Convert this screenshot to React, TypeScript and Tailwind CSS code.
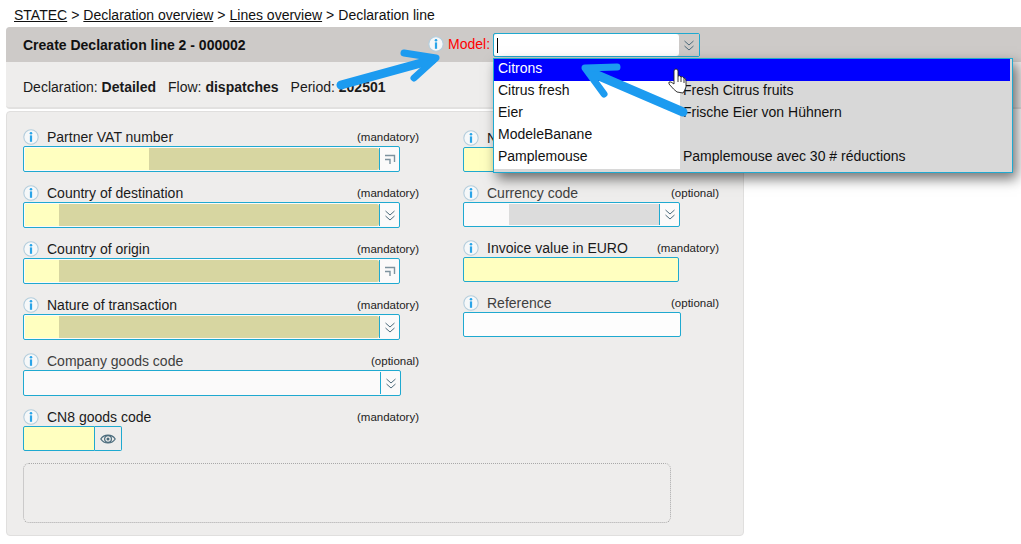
import React from "react";

const teal = "border-[#1fa9d0]";

function Info() {
  return (
    <svg width="16" height="16" viewBox="0 0 16 16" className="shrink-0">
      <circle cx="8" cy="8" r="7.2" fill="#f6f8f9" stroke="#b4cedd" strokeWidth="1.1" />
      <circle cx="8" cy="4.2" r="1.3" fill="#2ba5e8" />
      <rect x="6.9" y="6.4" width="2.2" height="6.4" fill="#2ba5e8" />
    </svg>
  );
}

function Chevrons() {
  return (
    <svg width="12" height="13" viewBox="0 0 12 13" fill="none" stroke="#4d6a7a" strokeWidth="1">
      <path d="M1.5 2 L6 6 L10.5 2" />
      <path d="M1.5 7 L6 11 L10.5 7" />
    </svg>
  );
}

function Corner() {
  return (
    <svg width="12" height="12" viewBox="0 0 12 12" fill="none" stroke="#7d929e" strokeWidth="1.4">
      <path d="M1 2.5 H10.5 V9" />
      <path d="M1 6.5 H6 V11" />
    </svg>
  );
}

function Eye() {
  return (
    <svg width="16" height="12" viewBox="0 0 16 12" fill="none" stroke="#4a6b7c" strokeWidth="1.2">
      <path d="M0.8 6 C4 0.8 12 0.8 15.2 6 C12 11.2 4 11.2 0.8 6 Z" />
      <circle cx="8" cy="6" r="3.4" />
      <circle cx="8" cy="6" r="1.5" fill="#4a6b7c" stroke="none" />
    </svg>
  );
}

type FieldProps = {
  label: string;
  status: "mandatory" | "optional";
  total: string;
  children: React.ReactNode;
  dim?: boolean;
};

function Field({ label, status, total, children, dim }: FieldProps) {
  return (
    <div className={total}>
      <div className="flex h-[19px] items-center">
        <Info />
        <span className={`ml-2 text-[14px] leading-[16px] ${dim ? "text-[#3f3f3f]" : "text-[#1a1a1a]"}`}>{label}</span>
        <span className="ml-auto text-[11.5px] leading-[14px] text-[#222]">({status})</span>
      </div>
      {children}
    </div>
  );
}

function ComboInput({
  yellow,
  fill,
  icon,
  width,
}: {
  yellow: string;
  fill: boolean;
  icon: "chev" | "corner";
  width: string;
}) {
  return (
    <div className={`flex h-[26px] ${width} rounded-[2px] border ${teal} bg-[#fbfafa] py-px pl-px`}>
      <div className={`${yellow} h-full`} />
      {fill && <div className="h-full flex-1 rounded-r-[2px] bg-[#d7d6a1]" />}
      {!fill && <div className="flex-1" />}
      <div className="w-px bg-[#1fa9d0]" />
      <div className="flex w-[19px] items-center justify-center">
        {icon === "chev" ? <Chevrons /> : <Corner />}
      </div>
    </div>
  );
}

function Arrow({ shaft, head }: { shaft: string; head: string }) {
  return (
    <g stroke="#1c9bf0" strokeLinecap="round" strokeLinejoin="round" fill="none">
      <path d={shaft} strokeWidth="9" />
      <path d={head} strokeWidth="7" />
    </g>
  );
}

const items = [
  { name: "Citrons", desc: "" },
  { name: "Citrus fresh", desc: "Fresh Citrus fruits" },
  { name: "Eier", desc: "Frische Eier von Hühnern" },
  { name: "ModeleBanane", desc: "" },
  { name: "Pamplemouse", desc: "Pamplemouse avec 30 # réductions" },
];

export default function App() {
  return (
    <div className="relative h-[544px] w-[1021px] overflow-hidden bg-white font-['Liberation_Sans',Arial,sans-serif] text-[14px] text-black">
      <div className="flex h-[27px] items-start pl-[14px] pt-[7px] leading-[16px] text-[#111]">
        <span className="underline">STATEC</span>
        <span className="mx-[4px]">&gt;</span>
        <span className="underline">Declaration overview</span>
        <span className="mx-[4px]">&gt;</span>
        <span className="underline">Lines overview</span>
        <span className="mx-[4px]">&gt;</span>
        <span>Declaration line</span>
      </div>

      <div className="ml-[6px] h-[82px] w-[1040px] rounded-[4px] border-b-2 border-[#e2e1e0] bg-[#eeedec]">
        <div className="relative flex h-[35px] items-center rounded-t-[4px] bg-[#cdcac8] pl-[17px]">
          <span className="text-[14px] font-bold leading-[16px] text-[#111]">Create Declaration line 2 - 000002</span>
          <div className="absolute left-[422px] top-[9px] flex items-center">
            <Info />
            <span className="ml-[4px] text-[14px] leading-[16px] text-[#ff0000]">Model:</span>
          </div>
          <div className={`absolute left-[487px] top-[6px] flex h-[24px] w-[207px] rounded-[2px] border ${teal}`}>
            <div className="flex flex-1 items-center rounded-[3px] bg-white pl-[3px]">
              <div className="h-[15px] w-px bg-black" />
            </div>
            <div className="flex w-[20px] items-center justify-center bg-[#cdcac8]">
              <Chevrons />
            </div>
          </div>
        </div>
        <div className="flex h-[45px] items-start pl-[17px] pt-[17px] text-[14px] leading-[16px] text-[#1a1a1a]">
          <span>Declaration:&nbsp;<b>Detailed</b></span>
          <span className="ml-[12px]">Flow:&nbsp;<b>dispatches</b></span>
          <span className="ml-[12px]">Period:&nbsp;<b>202501</b></span>
        </div>
      </div>

      <div className="ml-[6px] mt-[2px] h-[425px] w-[738px] rounded-[4px] border border-[#e0dfde] bg-[#eeedec] pl-[16px] pt-[15px]">
        <div className="flex">
          <div className="flex w-[440px] flex-col gap-[11px]">
            <Field label="Partner VAT number" status="mandatory" total="w-[396px]">
              <ComboInput width="w-[377px]" yellow="w-[124px] bg-[#ffffc0]" fill icon="corner" />
            </Field>
            <Field label="Country of destination" status="mandatory" total="w-[396px]">
              <ComboInput width="w-[377px]" yellow="w-[34px] bg-[#ffffc0]" fill icon="chev" />
            </Field>
            <Field label="Country of origin" status="mandatory" total="w-[396px]">
              <ComboInput width="w-[377px]" yellow="w-[34px] bg-[#ffffc0]" fill icon="corner" />
            </Field>
            <Field label="Nature of transaction" status="mandatory" total="w-[396px]">
              <ComboInput width="w-[377px]" yellow="w-[34px] bg-[#ffffc0]" fill icon="chev" />
            </Field>
            <Field label="Company goods code" status="optional" total="w-[396px]" dim>
              <ComboInput width="w-[378px]" yellow="w-0" fill={false} icon="chev" />
            </Field>
            <Field label="CN8 goods code" status="mandatory" total="w-[396px]">
              <div className="flex h-[25px]">
                <div className={`h-full w-[72px] rounded-l-[2px] border ${teal} bg-[#ffffc0]`} />
                <div className={`flex h-full w-[27px] items-center justify-center rounded-r-[2px] border border-l-0 ${teal}`}>
                  <Eye />
                </div>
              </div>
            </Field>
          </div>

          <div className="flex w-[256px] flex-col gap-[11px] pt-px">
            <Field label="N" status="mandatory" total="w-[256px]">
              <div className={`h-[25px] w-[216px] rounded-[2px] border ${teal} bg-[#ffffc0]`} />
            </Field>
            <Field label="Currency code" status="optional" total="w-[256px]" dim>
              <div className={`flex h-[25px] w-[217px] rounded-[2px] border ${teal} bg-[#fbfafa] py-px`}>
                <div className="w-[45px]" />
                <div className="h-full flex-1 bg-[#dcdcdc]" />
                <div className="w-px bg-[#1fa9d0]" />
                <div className="flex w-[19px] items-center justify-center">
                  <Chevrons />
                </div>
              </div>
            </Field>
            <Field label="Invoice value in EURO" status="mandatory" total="w-[256px]">
              <div className={`h-[25px] w-[216px] rounded-[2px] border ${teal} bg-[#ffffc0]`} />
            </Field>
            <Field label="Reference" status="optional" total="w-[256px]" dim>
              <div className={`h-[25px] w-[218px] rounded-[2px] border ${teal} bg-[#fdfdfd]`} />
            </Field>
          </div>
        </div>

        <div className="mt-[12px] h-[60px] w-[648px] rounded-[6px] border border-dotted border-[#a8a8a8]" />
      </div>

      {/* open dropdown list */}
      <div className={`absolute left-[493px] top-[58px] w-[520px] border ${teal} bg-[#d8d8d8] pb-[3px] shadow-[4px_6px_12px_rgba(0,0,0,0.55)]`}>
        {items.map((it, i) => (
          <div key={it.name} className={`flex h-[22px] items-start leading-[18px] ${i === 0 ? "mr-[2px] bg-[#0000ff]" : ""}`}>
            <span className={`h-full w-[186px] pl-[4px] ${i === 0 ? "text-white" : "bg-white text-[#111]"}`}>{it.name}</span>
            <span className="pl-[3px] text-[#111]">{it.desc}</span>
          </div>
        ))}
      </div>

      {/* annotations over the screenshot */}
      <svg className="pointer-events-none absolute left-0 top-0" width="1021" height="544" viewBox="0 0 1021 544">
        <Arrow shaft="M341 85 L432 60" head="M404 53 L436 58 L414 78" />
        <Arrow shaft="M683 112 L590 72" head="M617 67 L585 68 L604 94" />
        <path
          d="M674 71 Q674 69 676 69 Q678 69 678 71 L678 76 Q680 75 681 77 Q683 76 684 78 Q686 78 686 81 L686 87 Q685 90 683 93 L677 92 Q674 90 669 84 Q668 81 671 82 L674 84 Z M678 76 L678 82 M681 77 L681 82 M684 78 L684 83"
          fill="#fff"
          stroke="#222"
          strokeWidth="0.9"
          strokeLinejoin="round"
        />
      </svg>
    </div>
  );
}
